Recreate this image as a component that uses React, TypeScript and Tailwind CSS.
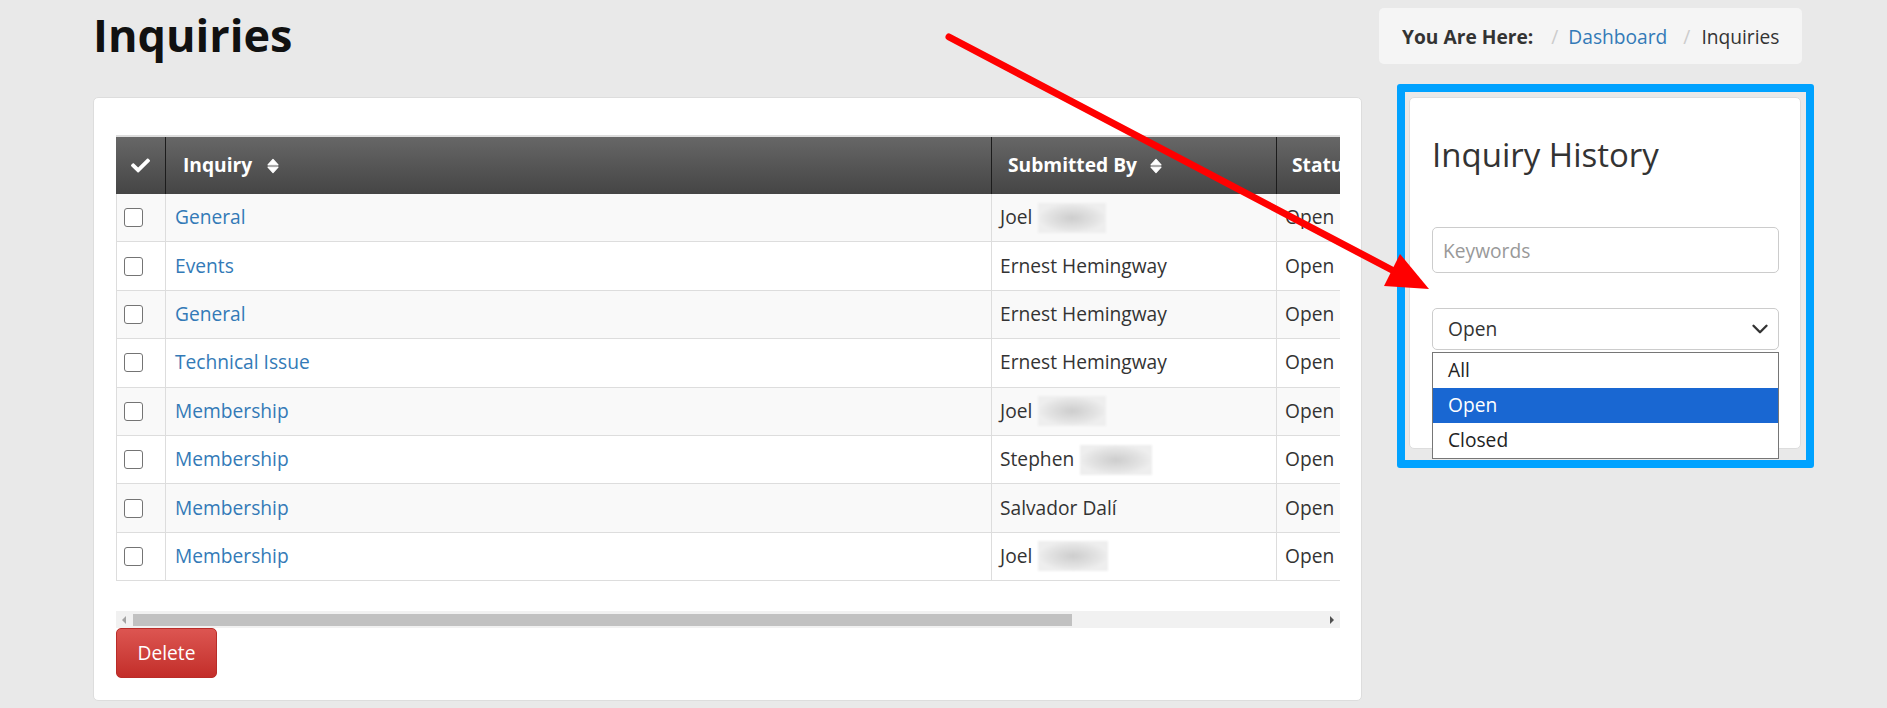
import { ChevronDown } from 'lucide-react'
import { FaCheck } from 'react-icons/fa'

type Row = { type: string; by: string; blur?: number }

const rows: Row[] = [
  { type: 'General', by: 'Joel', blur: 68 },
  { type: 'Events', by: 'Ernest Hemingway' },
  { type: 'General', by: 'Ernest Hemingway' },
  { type: 'Technical Issue', by: 'Ernest Hemingway' },
  { type: 'Membership', by: 'Joel', blur: 68 },
  { type: 'Membership', by: 'Stephen', blur: 72 },
  { type: 'Membership', by: 'Salvador Dalí' },
  { type: 'Membership', by: 'Joel', blur: 70 },
]

function SortIcon() {
  return (
    <svg width="12" height="16" viewBox="0 0 12 16" className="shrink-0">
      <path d="M1 6.8 L6 1.4 L11 6.8 Z" fill="currentColor" stroke="currentColor" strokeWidth="1.2" strokeLinejoin="round" />
      <path d="M1 9.2 L6 14.6 L11 9.2 Z" fill="currentColor" stroke="currentColor" strokeWidth="1.2" strokeLinejoin="round" />
    </svg>
  )
}

function Checkbox() {
  return <span className="block w-[19px] h-[19px] rounded-[3px] border-[1.5px] border-[#747474] bg-white" />
}

function InquiryTable() {
  return (
    <div className="w-[1224px] overflow-hidden border-t-2 border-[#dddddd]">
      <div className="w-[1550px]">
        {/* header */}
        <div className="flex h-[57px] bg-linear-to-b from-[#676767] to-[#454545] text-white font-bold text-[19.2px]">
          <div className="w-[50px] border-r border-[#1c1c1c] flex items-center justify-center">
            <FaCheck size={19} />
          </div>
          <div className="w-[826px] border-r border-[#1c1c1c] flex items-center pl-[17px] gap-[15px]">
            <span>Inquiry</span>
            <SortIcon />
          </div>
          <div className="w-[285px] border-r border-[#1c1c1c] flex items-center pl-[16px] gap-[13px]">
            <span>Submitted By</span>
            <SortIcon />
          </div>
          <div className="flex-1 flex items-center pl-[15px]">
            <span>Status</span>
          </div>
        </div>

        {/* body */}
        {rows.map((row, i) => (
          <div
            key={i}
            className={`flex h-[48.4px] border-l border-b border-[#dddddd] text-[19.2px] ${i % 2 === 0 ? 'bg-[#f9f9f9]' : 'bg-white'}`}
          >
            <div className="w-[49px] border-r border-[#dddddd] flex items-center pl-[7px]">
              <Checkbox />
            </div>
            <div className="w-[826px] border-r border-[#dddddd] flex items-center pl-[9px] text-[#337ab7]">
              {row.type}
            </div>
            <div className="w-[285px] border-r border-[#dddddd] flex items-center pl-[8px] text-[#333333]">
              <span>{row.by}</span>
              {row.blur && (
                <span
                  className="ml-[6px] h-[30px] bg-[radial-gradient(closest-side,#cdcdcd,#e3e3e3_70%,#eeeeee)] blur-[1px]"
                  style={{ width: row.blur }}
                />
              )}
            </div>
            <div className="flex-1 flex items-center pl-[8px] text-[#333333]">Open</div>
          </div>
        ))}
      </div>
    </div>
  )
}

function FakeScrollbar() {
  return (
    <div className="mt-[30px] w-[1224px] h-[17px] bg-[#f1f1f1] flex items-center">
      <div className="w-[16px] h-full flex items-center justify-center">
        <span className="block w-0 h-0 border-y-[4px] border-y-transparent border-r-[4px] border-r-[#a3a3a3]" />
      </div>
      <div className="ml-px w-[939px] h-[12px] bg-[#c1c1c1]" />
      <div className="flex-1" />
      <div className="w-[16px] h-full flex items-center justify-center">
        <span className="block w-0 h-0 border-y-[4px] border-y-transparent border-l-[4px] border-l-[#505050]" />
      </div>
    </div>
  )
}

function Breadcrumb() {
  return (
    <div className="mt-[8px] h-[56px] rounded-[5px] bg-[#f5f5f5] pl-[23px] pt-[2px] flex items-center text-[19.2px] text-[#333333]">
      <span className="font-bold">You Are Here:</span>
      <span className="ml-[18px] mr-[10px] text-[#cccccc]">/</span>
      <span className="text-[#337ab7]">Dashboard</span>
      <span className="ml-[16px] mr-[11px] text-[#cccccc]">/</span>
      <span>Inquiries</span>
    </div>
  )
}

function HistoryPanel() {
  return (
    <div className="mt-[20px] ml-[18px] w-[417px] border-[8px] border-[#00a2ff] rounded-[3px] pt-[5px] pl-[4px] pr-[5px] pb-[11px]">
      <div className="h-[352px] rounded-[5px] border border-[#dddddd] bg-white pt-[40px] px-[22px]">
        <h2 className="text-[33px] leading-[33px] text-[#333333]">Inquiry History</h2>
        <input
          placeholder="Keywords"
          className="mt-[56px] block w-[347px] h-[46px] rounded-[5px] border border-[#cccccc] px-[10px] text-[19.2px] text-[#555555] placeholder:text-[#999999] outline-none"
        />
        <div className="relative mt-[35px] w-[347px]">
          <div className="h-[42px] rounded-[5px] border border-[#cccccc] bg-white flex items-center justify-between pl-[15px] pr-[5px] text-[19.2px] text-[#333333]">
            <span>Open</span>
            <ChevronDown size={26} strokeWidth={2.2} className="text-[#333333]" />
          </div>
          {/* open option list */}
          <div className="absolute left-0 top-[44px] w-full border border-[#767676] bg-white text-[19.2px] text-[#222222] z-10">
            <div className="h-[35px] flex items-center pl-[15px]">All</div>
            <div className="h-[35px] flex items-center pl-[15px] bg-[#1967d2] text-white">Open</div>
            <div className="h-[35px] flex items-center pl-[15px]">Closed</div>
          </div>
        </div>
      </div>
    </div>
  )
}

function AnnotationArrow() {
  return (
    <svg className="absolute inset-0 pointer-events-none z-20" width="1887" height="708" viewBox="0 0 1887 708">
      <line x1="949" y1="37" x2="1392" y2="270" stroke="#ff0000" strokeWidth="7" strokeLinecap="round" />
      <polygon points="1400,254 1384,286 1429,289" fill="#ff0000" />
    </svg>
  )
}

export default function App() {
  return (
    <div className="relative w-[1887px] h-[708px] overflow-hidden bg-[#e9e9e9] font-['Open_Sans',sans-serif]">
      <div className="flex pl-[93px]">
        {/* main column */}
        <div className="w-[1269px]">
          <div className="h-[97px] pt-[12px]">
            <h1 className="text-[45px] leading-none font-bold text-[#111111]">Inquiries</h1>
          </div>
          <div className="h-[604px] rounded-[5px] border border-[#dddddd] bg-white pt-[37px] px-[22px]">
            <InquiryTable />
            <FakeScrollbar />
            <button className="block w-[101px] h-[50px] rounded-[5px] border border-[#b92c28] bg-linear-to-b from-[#dc5551] to-[#c32d29] text-white text-[19.2px]">
              Delete
            </button>
          </div>
        </div>

        {/* side column */}
        <div className="ml-[17px] w-[423px]">
          <Breadcrumb />
          <HistoryPanel />
        </div>
      </div>
      <AnnotationArrow />
    </div>
  )
}
